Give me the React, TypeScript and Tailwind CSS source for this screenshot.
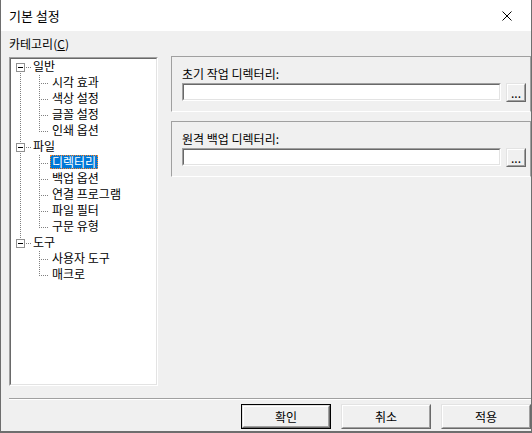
import React from "react";

const FONT = "font-['Noto_Sans_CJK_KR','Noto_Sans',sans-serif]";

const tree = [
  { label: "일반", children: ["시각 효과", "색상 설정", "글꼴 설정", "인쇄 옵션"] },
  { label: "파일", children: ["디렉터리", "백업 옵션", "연결 프로그램", "파일 필터", "구문 유형"] },
  { label: "도구", children: ["사용자 도구", "매크로"] },
];

const SELECTED = "디렉터리";
const ROW = 16;

type Row = { label: string; root: boolean };

function flatten(): Row[] {
  const rows: Row[] = [];
  tree.forEach((n) => {
    rows.push({ label: n.label, root: true });
    n.children.forEach((c) => rows.push({ label: c, root: false }));
  });
  return rows;
}

function TreeLines() {
  const lines: React.ReactNode[] = [];
  let idx = 0;
  const rootRows: number[] = [];
  tree.forEach((n, ni) => {
    const r = idx;
    rootRows.push(r);
    const cy = r * ROW + 8;
    // box
    lines.push(<rect key={`b${ni}`} x={5.5} y={cy - 3.5} width={8} height={8} fill="white" stroke="#919191" />);
    lines.push(<line key={`m${ni}`} x1={7} x2={12} y1={cy + 0.5} y2={cy + 0.5} stroke="#000" />);
    lines.push(<line key={`h${ni}`} x1={15} x2={20} y1={cy + 0.5} y2={cy + 0.5} stroke="#808080" strokeDasharray="1 1" />);
    const last = r + n.children.length;
    lines.push(
      <line key={`v${ni}`} x1={28.5} x2={28.5} y1={(r + 1) * ROW} y2={last * ROW + 9} stroke="#808080" strokeDasharray="1 1" />
    );
    n.children.forEach((_, ci) => {
      const y = (r + 1 + ci) * ROW + 8.5;
      lines.push(<line key={`c${ni}-${ci}`} x1={30} x2={38} y1={y} y2={y} stroke="#808080" strokeDasharray="1 1" />);
    });
    idx += 1 + n.children.length;
  });
  for (let i = 0; i < rootRows.length - 1; i++) {
    const a = rootRows[i] * ROW + 8;
    const b = rootRows[i + 1] * ROW + 8;
    lines.push(<line key={`rv${i}`} x1={9.5} x2={9.5} y1={a + 6} y2={b - 4} stroke="#808080" strokeDasharray="1 1" />);
  }
  return (
    <svg className="pointer-events-none absolute left-0 top-0" width={145} height={320} shapeRendering="crispEdges">
      {lines}
    </svg>
  );
}

function Sunken({ className, children }: { className?: string; children?: React.ReactNode }) {
  return (
    <div className={`border border-t-[#a0a0a0] border-l-[#a0a0a0] border-b-white border-r-white ${className ?? ""}`}>
      <div className="h-full w-full border border-t-[#696969] border-l-[#696969] border-b-[#e3e3e3] border-r-[#e3e3e3] bg-white">
        {children}
      </div>
    </div>
  );
}

function Raised({ label, className, def }: { label: string; className?: string; def?: boolean }) {
  const inner = (
    <div className="h-full w-full border border-t-[#e3e3e3] border-l-[#e3e3e3] border-b-[#696969] border-r-[#696969]">
      <div className="flex h-full w-full items-center justify-center border border-t-white border-l-white border-b-[#a0a0a0] border-r-[#a0a0a0] bg-[#f0f0f0] text-[12px] leading-[14px] text-black">
        {label}
      </div>
    </div>
  );
  return <div className={`${def ? "border border-black" : ""} ${className ?? ""}`}>{inner}</div>;
}

function PathPanel({ label, className }: { label: string; className?: string }) {
  return (
    <div className={`h-[56px] border border-t-[#a0a0a0] border-l-[#a0a0a0] border-b-white border-r-[#a0a0a0] pl-[10px] pt-[10px] ${className ?? ""}`}>
      <div className="text-[12px] leading-[14px] text-black">{label}</div>
      <div className="mt-[2px] flex items-start">
        <Sunken className="h-[18px] w-[319px]" />
        <Raised label="..." className="ml-[5px] h-[19px] w-[20px]" />
      </div>
    </div>
  );
}

export default function App() {
  const rows = flatten();
  return (
    <div className={`${FONT} flex h-[433px] w-[532px] flex-col overflow-hidden border-b-2 border-l border-r border-[#6e6e6e] bg-[#f0f0f0] text-black`}>
      <div className="flex h-[31px] shrink-0 items-center justify-between bg-white pl-[8px] pr-[19px]">
        <span className="text-[13px] leading-[16px]">기본 설정</span>
        <svg width="10" height="10" viewBox="0 0 10 10">
          <path d="M0.5 0.5 L9.5 9.5 M9.5 0.5 L0.5 9.5" stroke="#000" strokeWidth="1" fill="none" />
        </svg>
      </div>

      <div className="h-[25px] shrink-0 pl-[8px] pt-[6px] text-[12px] leading-[14px]">
        카테고리(<span className="underline underline-offset-1">C</span>)
      </div>

      <div className="flex h-[330px] shrink-0">
        <Sunken className="ml-[8px] mt-[1px] h-[329px] w-[149px]">
          <div className="relative h-full">
            <TreeLines />
            <div className="relative">
              {rows.map((r) => {
                const sel = r.label === SELECTED;
                return (
                  <div key={r.label} className={`flex h-[16px] items-start ${r.root ? "pl-[20px]" : "pl-[39px]"}`}>
                    <span
                      className={`h-[14px] border border-dotted px-[1px] text-[12px] leading-[12px] whitespace-nowrap ${
                        sel ? "border-[#ff8728] bg-[#0078d7] text-white" : "border-transparent"
                      }`}
                    >
                      {r.label}
                    </span>
                  </div>
                );
              })}
            </div>
          </div>
        </Sunken>

        <div className="ml-[13px] flex w-[360px] flex-col">
          <PathPanel label="초기 작업 디렉터리:" />
          <PathPanel label="원격 백업 디렉터리:" className="mt-[9px]" />
        </div>
      </div>

      <div className="ml-[8px] mt-[12px] h-[2px] shrink-0 border-t border-b border-t-[#a0a0a0] border-b-white" />

      <div className="mt-[4px] flex h-[25px] shrink-0 justify-end gap-[10px]">
        <Raised label="확인" def className="h-[25px] w-[90px]" />
        <Raised label="취소" className="h-[25px] w-[90px]" />
        <Raised label="적용" className="h-[25px] w-[90px]" />
      </div>
    </div>
  );
}
